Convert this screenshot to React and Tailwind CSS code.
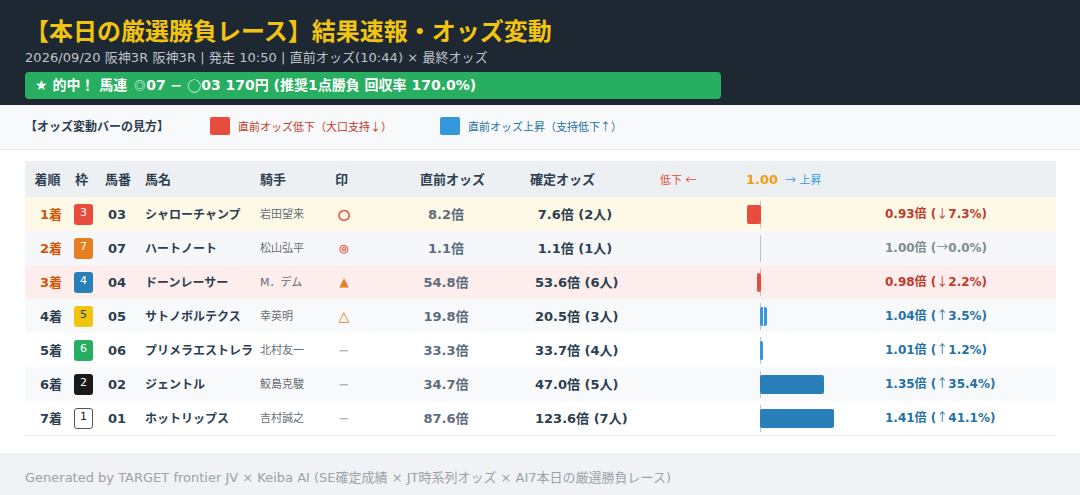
import React from "react";

const FONT = "font-['DejaVu_Sans','Noto_Sans_CJK_JP',sans-serif]";
const COLS = "grid grid-cols-[40px_40px_40px_115px_75px_60px_110px_110px_65px_205px_1fr] items-center";

// 記号だけ CJK フォントの字形にする
const Sym = ({ children, className = "" }) => (
  <span className={`font-['Noto_Sans_CJK_JP',sans-serif] font-normal ${className}`}>{children}</span>
);

const rows = [
  { pos: "1着", posColor: "text-[#d35400]", waku: "3", wakuClass: "bg-[#e74c3c] text-white", num: "03", name: "シャローチャンプ", jockey: "岩田望来", mark: "○", markClass: "text-[#e74c3c] text-[14px] font-bold [-webkit-text-stroke:0.6px_#e74c3c]", pre: "8.2倍", fin: "7.6倍 (2人)", bg: "h-[34px] bg-[#fef9e7]", left: 14, right: 0, barColor: "bg-[#e74c3c]", ratio: "0.93倍 (", arrow: "↓", tail: "7.3%)", ratioColor: "text-[#c0392b]" },
  { pos: "2着", posColor: "text-[#d35400]", waku: "7", wakuClass: "bg-[#e67e22] text-white", num: "07", name: "ハートノート", jockey: "松山弘平", mark: "◎", markClass: "text-[#e74c3c] text-[11px] font-bold [-webkit-text-stroke:0.3px_#e74c3c]", pre: "1.1倍", fin: "1.1倍 (1人)", bg: "h-[34px] bg-[#f5f7fa]", left: 0, right: 0, barColor: "", ratio: "1.00倍 (", arrow: "→", tail: "0.0%)", ratioColor: "text-[#7f8c8d]" },
  { pos: "3着", posColor: "text-[#d35400]", waku: "4", wakuClass: "bg-[#2980b9] text-white", num: "04", name: "ドーンレーサー", jockey: "M．デム", mark: "▲", markClass: "text-[#e67e22] text-[12px]", pre: "54.8倍", fin: "53.6倍 (6人)", bg: "h-[34px] bg-[#fdedec]", left: 4, right: 0, barColor: "bg-[#e74c3c]", ratio: "0.98倍 (", arrow: "↓", tail: "2.2%)", ratioColor: "text-[#c0392b]" },
  { pos: "4着", posColor: "text-[#2c3e50]", waku: "5", wakuClass: "bg-[#f1c40f] text-[#2c3e50]", num: "05", name: "サトノボルテクス", jockey: "幸英明", mark: "△", markClass: "text-[#e67e22] text-[14px]", pre: "19.8倍", fin: "20.5倍 (3人)", bg: "h-[34px] bg-[#f8f9fb]", left: 0, right: 7, split: true, barColor: "bg-[#3498db]", ratio: "1.04倍 (", arrow: "↑", tail: "3.5%)", ratioColor: "text-[#2471a3]" },
  { pos: "5着", posColor: "text-[#2c3e50]", waku: "6", wakuClass: "bg-[#27ae60] text-white", num: "06", name: "プリメラエストレラ", jockey: "北村友一", mark: "−", markClass: "text-[#95a5a6] text-[13px]", pre: "33.3倍", fin: "33.7倍 (4人)", bg: "h-[34px] bg-white", left: 0, right: 3, barColor: "bg-[#3498db]", ratio: "1.01倍 (", arrow: "↑", tail: "1.2%)", ratioColor: "text-[#2471a3]" },
  { pos: "6着", posColor: "text-[#2c3e50]", waku: "2", wakuClass: "bg-[#1a1a1a] text-white", num: "02", name: "ジェントル", jockey: "鮫島克駿", mark: "−", markClass: "text-[#95a5a6] text-[13px]", pre: "34.7倍", fin: "47.0倍 (5人)", bg: "h-[34px] bg-[#f8f9fb]", left: 0, right: 64, barColor: "bg-[#2980b9]", ratio: "1.35倍 (", arrow: "↑", tail: "35.4%)", ratioColor: "text-[#2471a3]" },
  { pos: "7着", posColor: "text-[#2c3e50]", waku: "1", wakuClass: "bg-white text-[#1a1a1a] border border-[#555555]", num: "01", name: "ホットリップス", jockey: "吉村誠之", mark: "−", markClass: "text-[#95a5a6] text-[13px]", pre: "87.6倍", fin: "123.6倍 (7人)", bg: "h-[35px] bg-white border-b border-[#e5e8eb]", left: 0, right: 74, barColor: "bg-[#2980b9]", ratio: "1.41倍 (", arrow: "↑", tail: "41.1%)", ratioColor: "text-[#2471a3]" },
];

const OddsBar = ({ left, right, color, split }) => (
  <div className="relative h-[27px] w-[160px] flex items-center">
    <div className="absolute left-[80px] top-0 bottom-0 w-px bg-[#bdc3c7]"></div>
    <div className="relative w-[81px] flex justify-end">
      {left > 0 && <div className={`h-[19px] rounded-[2px] ${color}`} style={{ width: left }}></div>}
    </div>
    <div className="relative w-[79px] -ml-px flex gap-px">
      {split ? (
        <>
          <div className={`h-[19px] w-[3px] rounded-l-[2px] ${color}`}></div>
          <div className={`h-[19px] w-[3px] rounded-r-[2px] ${color}`}></div>
        </>
      ) : (
        right > 0 && <div className={`h-[19px] rounded-[2px] ${color}`} style={{ width: right }}></div>
      )}
    </div>
  </div>
);

const App = () => {
  return (
    <div className={`w-[1080px] h-[495px] overflow-hidden bg-white flex flex-col ${FONT}`}>
      {/* Header */}
      <header className="h-[105px] bg-[#1e2832] px-[25px] pt-[16px]">
        <h1 className="text-[24px] leading-[32px] font-bold text-[#f1c40f]">【本日の厳選勝負レース】結果速報・オッズ変動</h1>
        <p className="mt-[1px] text-[13px] leading-[18px] tracking-[0.06px] text-[#bdc3c7]">2026/09/20 阪神3R 阪神3R | 発走 10:50 | 直前オッズ(10:44) × 最終オッズ</p>
        <div className="mt-[5px] w-[696px] h-[27px] px-[10px] flex items-center rounded-[4px] bg-[#27ae60] text-white text-[14px] font-bold whitespace-pre">
          ★ 的中！ 馬連 <Sym className="text-[11px] ml-[2px] mr-px">◎</Sym>07 − <Sym>○</Sym>03 170円 (推奨1点勝負 回収率 170.0%)
        </div>
      </header>

      {/* Legend */}
      <div className="h-[45px] bg-[#f8f9fa] border-b border-[#e5e8eb] pl-[25px] flex items-center text-[11px]">
        <span className="w-[185px] text-[12px] font-bold text-[#2c3e50]">【オッズ変動バーの見方】</span>
        <span className="w-[230px] flex items-center gap-2 text-[#c0392b]">
          <span className="w-[20px] h-[18px] -mt-[3px] rounded-[2px] bg-[#e74c3c]"></span>
          <span>直前オッズ低下（大口支持<Sym>↓</Sym>）</span>
        </span>
        <span className="flex items-center gap-2 text-[#2471a3]">
          <span className="w-[20px] h-[18px] -mt-[3px] rounded-[2px] bg-[#3498db]"></span>
          <span>直前オッズ上昇（支持低下<Sym>↑</Sym>）</span>
        </span>
      </div>

      {/* Table */}
      <main className="flex-1 px-[25px] pt-[11px] pr-[24px]">
        <div className={`${COLS} h-[36px] pt-[2px] bg-[#ecf0f3] text-[13px] font-bold text-[#2c3e50]`}>
          <span className="text-center pl-[5px]">着順</span>
          <span className="text-center pr-[7px]">枠</span>
          <span className="text-center pr-[14px]">馬番</span>
          <span>馬名</span>
          <span>騎手</span>
          <span>印</span>
          <span className="text-center pl-[5px]">直前オッズ</span>
          <span className="text-center pl-[5px]">確定オッズ</span>
          <span className="col-span-3 pl-[45px] flex items-center">
            <span className="w-[86px] text-[11px] font-normal text-[#e74c3c]">低下 <Sym>←</Sym></span>
            <span className="text-[#f39c12]">1.00</span>
            <span className="ml-[7px] text-[11px] font-normal text-[#3498db]"><Sym>→</Sym> 上昇</span>
          </span>
        </div>
        {rows.map((r) => (
          <div key={r.num} className={`${COLS} ${r.bg}`}>
            <span className={`text-center pl-[12px] pt-[2px] text-[13px] font-bold ${r.posColor}`}>{r.pos}</span>
            <span className="flex justify-center pr-[3px]">
              <span className={`w-[19px] h-[21px] pb-[2px] rounded-[3px] flex items-center justify-center text-[11px] ${r.wakuClass}`}>{r.waku}</span>
            </span>
            <span className="text-center pr-[16px] pt-[2px] text-[13px] font-bold text-[#2c3e50]">{r.num}</span>
            <span className="pt-[2px] text-[12px] font-bold text-[#2c3e50] whitespace-nowrap">{r.name}</span>
            <span className="pt-[2px] text-[11px] text-[#666e75] whitespace-nowrap">{r.jockey}</span>
            <span className={`w-[18px] text-center leading-none ${r.markClass}`}>{r.mark}</span>
            <span className="text-center pr-[8px] pt-[2px] text-[13px] font-bold text-[#5d6d7e]">{r.pre}</span>
            <span className="text-center pl-[30px] pt-[2px] text-[13px] font-bold text-[#2c3e50] whitespace-nowrap">{r.fin}</span>
            <span></span>
            <OddsBar left={r.left} right={r.right} color={r.barColor} split={r.split} />
            <span className={`pb-[2px] text-[12px] font-bold whitespace-nowrap ${r.ratioColor}`}>{r.ratio}<Sym>{r.arrow}</Sym>{r.tail}</span>
          </div>
        ))}
      </main>

      {/* Footer */}
      <footer className="h-[42px] pt-[8px] bg-[#f0f2f5] px-[25px] flex items-center text-[13px] text-[#9aa3a8]">
        Generated by TARGET frontier JV × Keiba AI (SE確定成績 × JT時系列オッズ × AI7本日の厳選勝負レース)
      </footer>
    </div>
  );
};

export default App;
